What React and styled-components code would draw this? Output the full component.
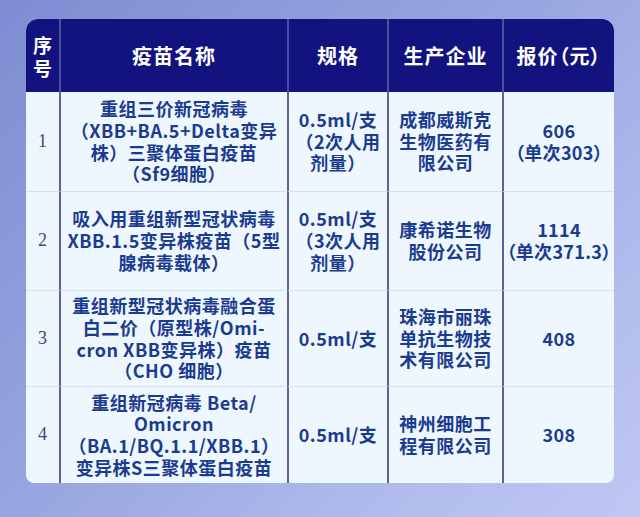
import styled, { createGlobalStyle } from "styled-components";

const GlobalStyle = createGlobalStyle`
  html, body {
    margin: 0;
    padding: 0;
  }
  body {
    width: 640px;
    height: 517px;
    overflow: hidden;
    font-family: "Noto Sans CJK SC", "Noto Sans", sans-serif;
  }
`;

const Page = styled.div`
  box-sizing: border-box;
  width: 640px;
  height: 517px;
  padding: 19px 26px 0 26px;
  background: linear-gradient(135deg, #7e8dd2 0%, #97a5e0 45%, #b3bdee 80%, #bfc8f3 100%);
`;

const Table = styled.div`
  display: grid;
  grid-template-columns: 33px 228px 100px 115px 112px;
  grid-template-rows: 73px 99px 99px 96px 97px;
  width: 588px;
  border-radius: 12px 12px 8px 8px;
  overflow: hidden;
  background: #eef6fe;
`;

const HeadCell = styled.div`
  display: flex;
  align-items: center;
  justify-content: center;
  background: #13137f;
  color: #ffffff;
  font-weight: 700;
  font-size: ${(p) => (p.$narrow ? "19px" : "20px")};
  line-height: 23px;
  letter-spacing: ${(p) => (p.$narrow ? "0" : "1px")};
  text-align: center;
  font-feature-settings: ${(p) => (p.$palt ? '"palt"' : "normal")};
  border-left: ${(p) => (p.$first ? "none" : "2px solid #4b4f9e")};
`;

const Cell = styled.div`
  display: flex;
  flex-direction: column;
  align-items: center;
  justify-content: center;
  text-align: center;
  color: #1b3b8f;
  font-weight: 700;
  font-size: 18px;
  line-height: 21.7px;
  letter-spacing: 0.5px;
  border-left: ${(p) => (p.$first ? "none" : "2px solid #5d6394")};
  border-top: ${(p) => (p.$top ? "none" : "1.5px solid #d3e3f4")};
  box-sizing: border-box;

  > span {
    white-space: nowrap;
  }
`;

const NumCell = styled(Cell)`
  font-family: "Liberation Serif", serif;
  font-weight: 400;
  font-size: 18px;
  color: #3b4878;
  letter-spacing: 0;
`;

const PriceCell = styled(Cell)`
  font-weight: 600;
  letter-spacing: 0.3px;
  font-feature-settings: "palt";
`;

const rows = [
  {
    no: "1",
    name: ["重组三价新冠病毒", "（XBB+BA.5+Delta变异", "株）三聚体蛋白疫苗", "（Sf9细胞）"],
    spec: ["0.5ml/支", "（2次人用", "剂量）"],
    maker: ["成都威斯克", "生物医药有", "限公司"],
    price: ["606", "（单次303）"],
  },
  {
    no: "2",
    name: ["吸入用重组新型冠状病毒", "XBB.1.5变异株疫苗（5型", "腺病毒载体）"],
    spec: ["0.5ml/支", "（3次人用", "剂量）"],
    maker: ["康希诺生物", "股份公司"],
    price: ["1114", "（单次371.3）"],
  },
  {
    no: "3",
    name: ["重组新型冠状病毒融合蛋", "白二价（原型株/Omi-", "cron XBB变异株）疫苗", "（CHO 细胞）"],
    spec: ["0.5ml/支"],
    maker: ["珠海市丽珠", "单抗生物技", "术有限公司"],
    price: ["408"],
  },
  {
    no: "4",
    name: ["重组新冠病毒 Beta/", "Omicron", "（BA.1/BQ.1.1/XBB.1）", "变异株S三聚体蛋白疫苗"],
    spec: ["0.5ml/支"],
    maker: ["神州细胞工", "程有限公司"],
    price: ["308"],
  },
];

const Lines = ({ items }) => items.map((t, i) => <span key={i}>{t}</span>);

const App = () => {
  return (
    <Page>
      <GlobalStyle />
      <Table>
        <HeadCell $first $narrow>
          序<br />号
        </HeadCell>
        <HeadCell>疫苗名称</HeadCell>
        <HeadCell>规格</HeadCell>
        <HeadCell>生产企业</HeadCell>
        <HeadCell $palt>报价（元）</HeadCell>

        {rows.map((r, i) => [
          <NumCell key={`n${i}`} $first $top={i === 0}>
            {r.no}
          </NumCell>,
          <Cell key={`a${i}`} $top={i === 0}>
            <Lines items={r.name} />
          </Cell>,
          <Cell key={`s${i}`} $top={i === 0}>
            <Lines items={r.spec} />
          </Cell>,
          <Cell key={`m${i}`} $top={i === 0}>
            <Lines items={r.maker} />
          </Cell>,
          <PriceCell key={`p${i}`} $top={i === 0}>
            <Lines items={r.price} />
          </PriceCell>,
        ])}
      </Table>
    </Page>
  );
};

export default App;
